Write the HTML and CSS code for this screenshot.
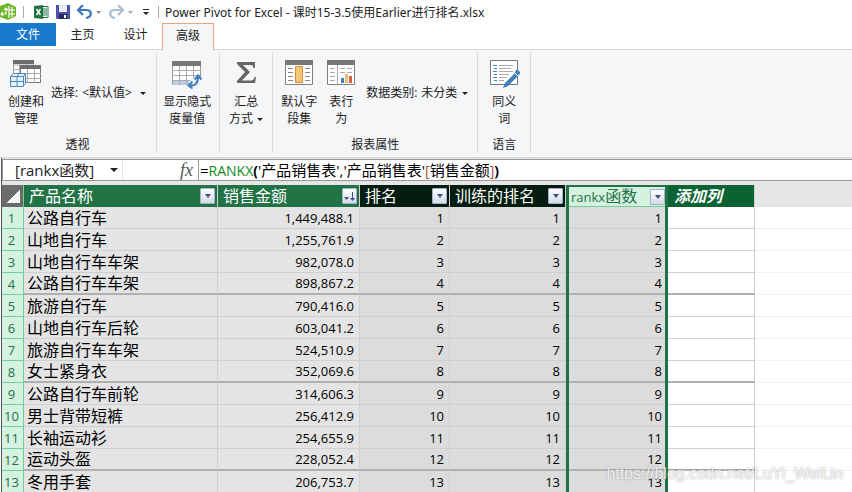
FILE: index.html
```html
<!DOCTYPE html>
<html lang="zh-CN">
<head>
    <meta charset="UTF-8">
    <meta name="viewport" content="width=device-width, initial-scale=1.0">
    <title>Power Pivot for Excel</title>
    <link rel="stylesheet" href="styles.css">
</head>
<body>
    <header class="titlebar">
        <svg class="app-logo" width="17" height="18" viewBox="0 0 17 18">
            <path d="M0 3l8-3 8 4v9l-8 4-8-3z" fill="#6fb52c"/>
            <path d="M9 3v12M9 7h6M9 11h6M12 4v10M1 11h5V5M4 7l2-2 2 2M3 9l-2 2 2 2" fill="none" stroke="#fff" stroke-width="1.2"/>
        </svg>
        <span class="divider"></span>
        <button class="tool tool-excel" aria-label="切换到工作簿">
            <svg width="15" height="14" viewBox="0 0 15 14">
                <path d="M8 1.5h6v11H8" fill="#fff" stroke="#217346"/>
                <path d="M9 4h4M9 6h4M9 8h4M9 10h4" stroke="#217346"/>
                <path d="M0 1l9-1v14l-9-1z" fill="#217346"/>
                <path d="M2.500 4l4 6M6.500 4l-4 6" stroke="#fff" stroke-width="1.400"/>
            </svg>
        </button>
        <button class="tool tool-save" aria-label="保存">
            <svg width="14" height="14" viewBox="0 0 14 14">
                <path d="M0 0h14v14H1l-1-1z" fill="#4c4fa8"/>
                <path d="M3 0h8v7H3z" fill="#e9ebf8"/>
                <path d="M3 9h8v5H3z" fill="#26285c"/>
                <path d="M8 10h2v3H8z" fill="#fff"/>
            </svg>
        </button>
        <button class="tool tool-undo" aria-label="撤消">
            <svg width="25" height="14" viewBox="0 0 25 14">
                <path d="M2 5h7c7 0 6 7 0 8" fill="none" stroke="#3a78b5" stroke-width="2.200"/>
                <path d="M6 0L1 5l5 5" fill="none" stroke="#3a78b5" stroke-width="2.200"/>
                <path d="M19 6h5l-2.500 3z" fill="#888"/>
            </svg>
        </button>
        <button class="tool tool-redo" aria-label="恢复">
            <svg width="25" height="14" viewBox="0 0 25 14">
                <path d="M13 5H6c-7 0-6 7 0 8" fill="none" stroke="#a9bdd2" stroke-width="2.200"/>
                <path d="M9 0l5 5-5 5" fill="none" stroke="#a9bdd2" stroke-width="2.200"/>
                <path d="M19 6h5l-2.500 3z" fill="#aaa"/>
            </svg>
        </button>
        <button class="tool tool-more" aria-label="自定义快速访问工具栏">
            <svg width="8" height="8" viewBox="0 0 8 8">
                <path d="M1 1.500h6" stroke="#222"/>
                <path d="M1 4h6L4 7z" fill="#222"/>
            </svg>
        </button>
        <span class="divider"></span>
        <span class="title">Power Pivot for Excel - 课时15-3.5使用Earlier进行排名.xlsx</span>
    </header>

    <nav class="tabs">
        <button class="tab tab-file">文件</button>
        <button class="tab">主页</button>
        <button class="tab">设计</button>
        <button class="tab tab-active">高级</button>
    </nav>

    <section class="ribbon">
        <div class="group group-view">
            <div class="group-body">
                <button class="command">
                    <svg width="34" height="30" viewBox="0 0 34 30">
                        <path d="M4.500 1.500h20v16h-20z" fill="#fff" stroke="#999"/>
                        <path d="M4 6h20M4 10.500h20M10.500 2v15M17.500 2v15" stroke="#aaa"/>
                        <path d="M4 1h21v4H4z" fill="#6d6d6d"/>
                        <path d="M11.500 6.500h20v17h-20z" fill="#fff" stroke="#777"/>
                        <path d="M11 14.500h21M11 19.500h21M18.500 10v14M25.500 10v14" stroke="#aaa"/>
                        <path d="M11 6h21v4H11z" fill="#6d6d6d"/>
                        <path d="M1 17l3-3h13v10l-3 3H1z" fill="#e8f1fa"/>
                        <path d="M1.500 17.500h13v10h-13zM1.500 22.500h13M8 17.500v10M1.500 17.500l3-3h12v10l-3 3M14.500 17.500l2-3M8 17.500l2-3" fill="none" stroke="#4a86c0"/>
                    </svg>
                    <span>创建和<br>管理</span>
                </button>
                <label class="field-label" for="perspective">选择:</label>
                <select id="perspective" class="picker">
                    <option>&lt;默认值&gt;</option>
                </select>
            </div>
            <div class="group-name">透视</div>
        </div>

        <div class="group group-measure">
            <div class="group-body">
                <button class="command">
                    <svg width="34" height="30" viewBox="0 0 34 30">
                        <path d="M2.500 2.500h28v23h-28z" fill="#fff" stroke="#999"/>
                        <path d="M3 21h16v5H3z" fill="#b9cde6"/>
                        <path d="M2 11.500h28M2 16.500h28M2 21.500h20M9.500 7v19M16.500 7v19M23.500 7v13" stroke="#aaa"/>
                        <path d="M2 2h29v5H2z" fill="#777"/>
                        <path d="M20 19h13v9H20z" fill="#f5f6f8"/>
                        <path d="M19 26.500c7 1 9-3 9-9" fill="none" stroke="#3f80bf" stroke-width="2.200"/>
                        <path d="M24.500 20.500l3.500-4 3.500 4M22.500 22.500l-4 4 4 3" fill="none" stroke="#3f80bf" stroke-width="2"/>
                    </svg>
                    <span>显示隐式<br>度量值</span>
                </button>
            </div>
        </div>

        <div class="group">
            <div class="group-body">
                <button class="command">
                    <svg width="34" height="30" viewBox="0 0 34 30">
                        <path d="M8 3h18v6h-1.500c0-2-1-3-3-3H14l7 7-8 8.500h9c2 0 3-1 3.500-3.500H27l-1 6H8v-2l8-9-8-8z" fill="#666"/>
                    </svg>
                    <span>汇总<br>方式 <i class="arrow"></i></span>
                </button>
            </div>
        </div>

        <div class="group">
            <div class="group-body">
                <button class="command">
                    <svg width="34" height="30" viewBox="0 0 34 30">
                        <path d="M3.500 1.500h27v24h-27z" fill="#fff" stroke="#808080"/>
                        <path d="M3 1h28v5H3z" fill="#777"/>
                        <path d="M6 9.500h5M6 13.500h5M6 17.500h5M6 21.500h5M23 9.500h5M23 13.500h5M23 17.500h5M23 21.500h5" stroke="#888"/>
                        <path d="M13.500 7.500h7v16h-7z" fill="#f0c778" stroke="#e5883a"/>
                    </svg>
                    <span>默认字<br>段集</span>
                </button>
                <button class="command">
                    <svg width="34" height="30" viewBox="0 0 34 30">
                        <path d="M3.500 1.500h27v24h-27z" fill="#fff" stroke="#808080"/>
                        <path d="M3 1h28v5H3z" fill="#777"/>
                        <path d="M6 9.500h5M6 13.500h5M6 17.500h5M6 21.500h5M16 9.500h5M23 9.500h5M16 13.500h5M23 13.500h5M13.500 6v19" stroke="#aaa"/>
                        <path d="M17 19h3v5h-3z" fill="#3f80bf"/>
                        <path d="M21 15h3v9h-3z" fill="#eebf6c"/>
                        <path d="M25 17h3v7h-3z" fill="#d8613c"/>
                    </svg>
                    <span>表行<br>为</span>
                </button>
                <label class="field-label" for="category">数据类别:</label>
                <select id="category" class="picker">
                    <option>未分类</option>
                </select>
            </div>
            <div class="group-name">报表属性</div>
        </div>

        <div class="group">
            <div class="group-body">
                <button class="command">
                    <svg width="34" height="30" viewBox="0 0 34 30">
                        <path d="M3.500 1.500h27v24h-27z" fill="#fff" stroke="#777"/>
                        <path d="M6 6.500h4M7 9.500h3M6 12.500h4M7 15.500h3M6 18.500h4M7 21.500h3" stroke="#3f80bf"/>
                        <path d="M12 6.500h14M12 9.500h12M12 12.500h14M12 15.500h10M12 18.500h8M12 21.500h5" stroke="#aaa"/>
                        <path d="M16 29l2-5L29 13l3 3-11 11z" fill="#3f80bf"/>
                        <path d="M28 14l3 3" stroke="#fff"/>
                        <path d="M31 11l2 2v2l-2 1-3-3 1-2z" fill="#3f80bf"/>
                    </svg>
                    <span>同义<br>词</span>
                </button>
            </div>
            <div class="group-name">语言</div>
        </div>
    </section>

    <main class="workspace">
        <div class="formula-bar">
            <select class="name-box" aria-label="名称框">
                <option>[rankx函数]</option>
            </select>
            <span class="fx">fx</span>
            <div class="formula" role="textbox" contenteditable="true" spellcheck="false" aria-label="公式">=<span class="fn">RANKX</span><b>(</b>'产品销售表','产品销售表'<span class="bracket">[</span>销售金额<span class="bracket">]</span><b>)</b></div>
        </div>

        <table class="grid">
            <colgroup>
                <col class="col-row">
                <col class="col-name">
                <col class="col-sales">
                <col class="col-rank">
                <col class="col-train">
                <col class="col-rankx">
                <col class="col-add">
                <col>
            </colgroup>
            <thead>
                <tr>
                    <th class="corner"></th>
                    <th><div class="head">产品名称<button class="filter" aria-label="筛选"></button></div></th>
                    <th><div class="head">销售金额<button class="filter sorted" aria-label="已排序">
                        <svg width="13" height="14" viewBox="0 0 13 14">
                            <path d="M1 8h5l-2.500 3z" fill="#3c4f8c"/>
                            <path d="M9.500 3v7" stroke="#3c4f8c"/>
                            <path d="M7 9h5l-2.500 3z" fill="#3c4f8c"/>
                        </svg>
                    </button></div></th>
                    <th class="calculated"><div class="head">排名<button class="filter" aria-label="筛选"></button></div></th>
                    <th class="calculated"><div class="head">训练的排名<button class="filter" aria-label="筛选"></button></div></th>
                    <th class="selected"><div class="head"><span><small>rankx</small>函数</span><button class="filter" aria-label="筛选"></button></div></th>
                    <th class="add">添加列</th>
                    <th class="rest"></th>
                </tr>
            </thead>
            <tbody>
                <tr><th>1</th><td>公路自行车</td><td>1,449,488.1</td><td>1</td><td>1</td><td>1</td><td></td><td></td></tr>
                <tr><th>2</th><td>山地自行车</td><td>1,255,761.9</td><td>2</td><td>2</td><td>2</td><td></td><td></td></tr>
                <tr><th>3</th><td>山地自行车车架</td><td>982,078.0</td><td>3</td><td>3</td><td>3</td><td></td><td></td></tr>
                <tr><th>4</th><td>公路自行车车架</td><td>898,867.2</td><td>4</td><td>4</td><td>4</td><td></td><td></td></tr>
                <tr><th>5</th><td>旅游自行车</td><td>790,416.0</td><td>5</td><td>5</td><td>5</td><td></td><td></td></tr>
                <tr><th>6</th><td>山地自行车后轮</td><td>603,041.2</td><td>6</td><td>6</td><td>6</td><td></td><td></td></tr>
                <tr><th>7</th><td>旅游自行车车架</td><td>524,510.9</td><td>7</td><td>7</td><td>7</td><td></td><td></td></tr>
                <tr><th>8</th><td>女士紧身衣</td><td>352,069.6</td><td>8</td><td>8</td><td>8</td><td></td><td></td></tr>
                <tr><th>9</th><td>公路自行车前轮</td><td>314,606.3</td><td>9</td><td>9</td><td>9</td><td></td><td></td></tr>
                <tr><th>10</th><td>男士背带短裤</td><td>256,412.9</td><td>10</td><td>10</td><td>10</td><td></td><td></td></tr>
                <tr><th>11</th><td>长袖运动衫</td><td>254,655.9</td><td>11</td><td>11</td><td>11</td><td></td><td></td></tr>
                <tr><th>12</th><td>运动头盔</td><td>228,052.4</td><td>12</td><td>12</td><td>12</td><td></td><td></td></tr>
                <tr><th>13</th><td>冬用手套</td><td>206,753.7</td><td>13</td><td>13</td><td>13</td><td></td><td></td></tr>
            </tbody>
        </table>
    </main>
    <div class="watermark">https://blog.csdn.net/LuYi_WeiLin</div>
</body>
</html>
```
FILE: styles.css
```css
* {
    box-sizing: border-box;
}

body {
    margin: 0;
    height: 100vh;
    overflow: hidden;
    position: relative;
    background-color: #fff;
    color: #222;
    font-family: "Open Sans", "Noto Sans CJK SC", sans-serif;
    font-size: 12px;
}

button,
select {
    margin: 0;
    padding: 0;
    border: none;
    background-color: transparent;
    color: inherit;
    font: inherit;
}

/* Title bar */
.titlebar {
    display: flex;
    align-items: center;
    height: 23px;
}

.app-logo {
    margin-right: 6px;
}

.divider {
    width: 1px;
    height: 12px;
    background-color: #aaa;
}

.tool {
    display: flex;
}

.tool-excel {
    margin-left: 10px;
}

.tool-save,
.tool-undo,
.tool-redo {
    margin-left: 7px;
}

.tool-more {
    margin: 0 8px;
}

.title {
    margin-left: 6px;
    font-family: "Noto Sans", "Noto Sans CJK SC", sans-serif;
    white-space: nowrap;
}

/* Tabs */
.tabs {
    display: flex;
    height: 27px;
    border-bottom: 1px solid #d5d5d5;
}

.tab {
    width: 53px;
    height: 24px;
    line-height: 24px;
}

.tab-file {
    width: 56px;
    height: 23px;
    background-color: #1979ca;
    color: #fff;
}

.tab-active {
    width: 52px;
    height: 27px;
    padding-bottom: 3px;
    border: 1px solid #f4a37c;
    border-bottom: none;
    background-color: #f5f6f8;
}

/* Ribbon */
.ribbon {
    display: flex;
    height: 108px;
    padding: 2px 0 4px;
    border-bottom: 1px solid #d6d6d6;
    background-color: #f5f6f8;
}

.group {
    display: flex;
    flex-direction: column;
    padding: 7px 5px 0;
    border-right: 1px solid #dcdddf;
}

.group-view {
    padding-right: 6px;
}

.group-measure {
    padding-right: 8px;
    padding-left: 6px;
}

.group-body {
    display: flex;
    flex: 1;
    align-items: flex-start;
}

.group-name {
    line-height: 16px;
    text-align: center;
}

.command {
    display: flex;
    flex-direction: column;
    align-items: center;
    min-width: 42px;
    line-height: 17px;
    text-align: center;
    white-space: nowrap;
}

.command svg {
    flex: none;
    margin-bottom: 4px;
}

.field-label {
    margin: 26px 4px 0;
    line-height: 16px;
    white-space: nowrap;
}

.picker,
.name-box {
    appearance: none;
    background-image: url("data:image/svg+xml,%3Csvg xmlns='http://www.w3.org/2000/svg' width='6' height='3'%3E%3Cpath d='M0 0h6L3 3z' fill='%23222'/%3E%3C/svg%3E");
    background-repeat: no-repeat;
    background-position: right 4px center;
}

.picker {
    height: 16px;
    margin-top: 26px;
    padding-right: 14px;
    line-height: 16px;
}

.group-view .picker {
    padding-right: 18px;
}

.arrow {
    display: inline-block;
    margin-left: 1px;
    border: 3px solid transparent;
    border-top-color: #222;
    border-bottom: none;
    vertical-align: middle;
}

/* Formula bar */
.workspace {
    margin-left: 1px;
    padding-top: 1px;
    border-left: 1px solid #555;
    background-color: #e6e6e6;
}

.formula-bar {
    display: flex;
    align-items: center;
    height: 22px;
    border: 1px solid #999;
    border-right: none;
    background-color: #fff;
    font-size: 15px;
}

.name-box {
    width: 120px;
    height: 20px;
    padding-left: 12px;
    border-right: 1px solid #e4e4e4;
    background-size: 8px 4px;
    line-height: 20px;
}

.fx {
    width: 76px;
    padding-right: 5px;
    border-right: 1px solid #999;
    color: #555;
    font-family: "Liberation Serif", serif;
    font-style: italic;
    font-size: 18px;
    line-height: 20px;
    text-align: right;
}

.formula {
    flex: 1;
    padding-left: 1px;
    color: #000;
    line-height: 20px;
    white-space: nowrap;
    outline: none;
}

.formula b {
    font-size: 14px;
}

.fn {
    color: #12891b;
    font-size: 14px;
}

.bracket {
    color: #a0522d;
    font-size: 14px;
}

/* Data grid */
.grid {
    width: 100%;
    margin-top: 4px;
    border-collapse: separate;
    border-spacing: 0;
    table-layout: fixed;
    background-color: #fff;
    color: #000;
}

.col-row { width: 22px; }
.col-name { width: 194px; }
.col-sales { width: 142px; }
.col-rank { width: 90px; }
.col-train { width: 116px; }
.col-rankx { width: 102px; }
.col-add { width: 87px; }

.grid th,
.grid td {
    height: 22px;
    padding: 0 5px;
    border-right: 1px solid #d0d0d0;
    border-bottom: 1px solid #d0d0d0;
    font-weight: normal;
    line-height: 20px;
    white-space: nowrap;
}

.grid thead th {
    padding: 0 2px 0 5px;
    border-bottom: none;
    background-color: #217346;
    color: #fff;
    font-size: 16px;
    text-align: left;
}

.head {
    display: flex;
    align-items: center;
    justify-content: space-between;
}

.grid thead .corner {
    padding: 4px 3px 4px 4px;
    border-right-color: #6fcf9b;
    background: linear-gradient(135deg, #6b6b6b 50%, #f4f4f4 50%) content-box, #6b6b6b;
}

.grid thead .calculated {
    background-color: #041d10;
}

.grid thead .selected {
    padding: 0 0 0 2px;
    border: 3px solid #217346;
    border-width: 2px 3px 0;
    background-color: #d5f1e0;
    box-shadow: inset 0 -1px #6fcf9b;
    color: #217346;
    line-height: 19px;
}

.selected small {
    font-size: 13px;
}

.grid thead .add {
    padding-left: 6px;
    background-color: #0b6233;
    font-style: italic;
    font-weight: bold;
}

.grid thead .rest {
    border-right: none;
    background-color: #e6e6e6;
}

.filter {
    display: flex;
    flex: none;
    align-items: center;
    justify-content: center;
    width: 15px;
    height: 16px;
    border: 1px solid #9fb2d0;
    border-radius: 1px;
    background-image: linear-gradient(#fdfdfe, #d5dae4);
}

.filter::before {
    content: "";
    border: 3px solid transparent;
    border-top: 4px solid #3c4f8c;
    border-bottom: none;
}

.filter.sorted::before {
    display: none;
}

.filter svg {
    flex: none;
}

.grid tbody th {
    padding: 0 2px 0 0;
    border-right-color: #6fcf9b;
    border-bottom-color: #6fcf9b;
    background-color: #d5f1e0;
    color: #217346;
    font-size: 13px;
}

.grid td {
    background-color: #dcdcdc;
    font-size: 13px;
    text-align: right;
}

.grid td:nth-child(2) {
    padding-left: 3px;
    background-color: #e4e4e4;
    font-size: 16px;
    text-align: left;
}

.grid td:nth-child(3) {
    background-color: #e4e4e4;
}

/* Selected column: side borders run unbroken, row lines are drawn inside */
.grid td:nth-child(6) {
    padding-right: 3px;
    border: 3px solid #217346;
    border-width: 0 3px;
    box-shadow: inset 0 -1px #d0d0d0;
}

.grid td:nth-child(7) {
    background-color: #fff;
}

.grid td:nth-child(8) {
    border-right: none;
    border-bottom-color: #f0f0f0;
    background-color: #fff;
}

/* Heavier rule after every fourth row */
.grid tr:nth-child(4n) td:not(:last-child) {
    border-bottom: 2px solid #b0b0b0;
    line-height: 19px;
}

.grid tr:nth-child(4n) td:nth-child(6):not(:last-child) {
    padding-bottom: 2px;
    border-bottom: none;
    box-shadow: inset 0 -2px #b0b0b0;
}

.watermark {
    position: absolute;
    right: 9px;
    bottom: 8px;
    color: rgba(255, 255, 255, 0.8);
    font-family: "Liberation Sans", sans-serif;
    font-size: 16px;
    line-height: 20px;
    text-shadow: 0 0 2px rgba(100, 100, 100, 0.6);
    pointer-events: none;
}
```
